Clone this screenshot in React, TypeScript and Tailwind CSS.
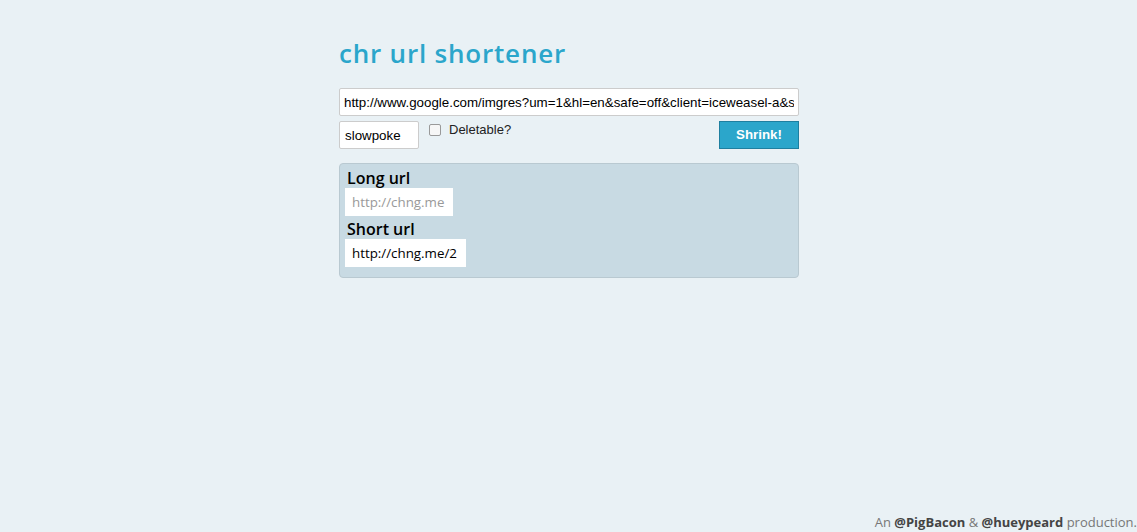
import { useState } from "react";

const App = () => {
  const [url, setUrl] = useState(
    "http://www.google.com/imgres?um=1&hl=en&safe=off&client=iceweasel-a&sa=N&rls=org.mozilla"
  );
  const [slug, setSlug] = useState("slowpoke");

  return (
    <div className="min-h-[532px] bg-[#e9f1f5] font-['Open_Sans',sans-serif] relative">
      <div className="w-[460px] ml-[339px] pt-[33px]">
        <h1 className="text-[26px] font-semibold text-[#2ba6cb] tracking-[0.8px] leading-[40px]">
          chr url shortener
        </h1>

        <div className="mt-[15px] space-y-[5px] font-['Liberation_Sans',sans-serif] text-[13.33px]">
          <input
            value={url}
            onChange={(e) => setUrl(e.target.value)}
            className="block w-full h-[28px] px-[4px] bg-white border border-[#ccc] rounded-[2px] text-black outline-none"
          />
          <div className="flex items-start">
            <input
              value={slug}
              onChange={(e) => setSlug(e.target.value)}
              className="w-[80px] h-[28px] px-[5px] bg-white border border-[#ccc] rounded-[2px] outline-none"
            />
            <label className="flex items-center ml-[10px] -mt-[1px] text-[13px] text-[#222]">
              <input
                type="checkbox"
                className="w-[12px] h-[12px] m-0 mr-[8px] appearance-none bg-[#f6f6f6] border border-[#999] rounded-[2px]"
              />
              Deletable?
            </label>
            <button className="ml-auto w-[80px] h-[28px] bg-[#2ba6cb] border border-[#1e7fa0] text-white font-bold text-[13.33px]">
              Shrink!
            </button>
          </div>
        </div>

        <div className="mt-[14px] bg-[#c8dae3] border border-[#b9c9d1] rounded-[4px] px-[5px] pt-[4px] pb-[10px]">
          <p className="text-[16px] font-semibold text-black leading-[20px] ml-[2px]">Long url</p>
          <div className="inline-block bg-white pl-[7px] pr-[9px] h-[28px] leading-[28px] text-[13.33px] text-[#999]">
            http://chng.me
          </div>
          <p className="text-[16px] font-semibold text-black leading-[20px] mt-[3px] ml-[2px]">Short url</p>
          <div className="inline-block bg-white pl-[7px] pr-[9px] h-[28px] leading-[28px] text-[13.33px] text-black">
            http://chng.me/2
          </div>
        </div>
      </div>

      <p className="absolute right-0 bottom-0 text-[13px] leading-[20px] text-[#777]">
        An <b className="font-bold text-[#444]">@PigBacon</b> &amp;{" "}
        <b className="font-bold text-[#444]">@hueypeard</b> production.
      </p>
    </div>
  );
};

export default App;
